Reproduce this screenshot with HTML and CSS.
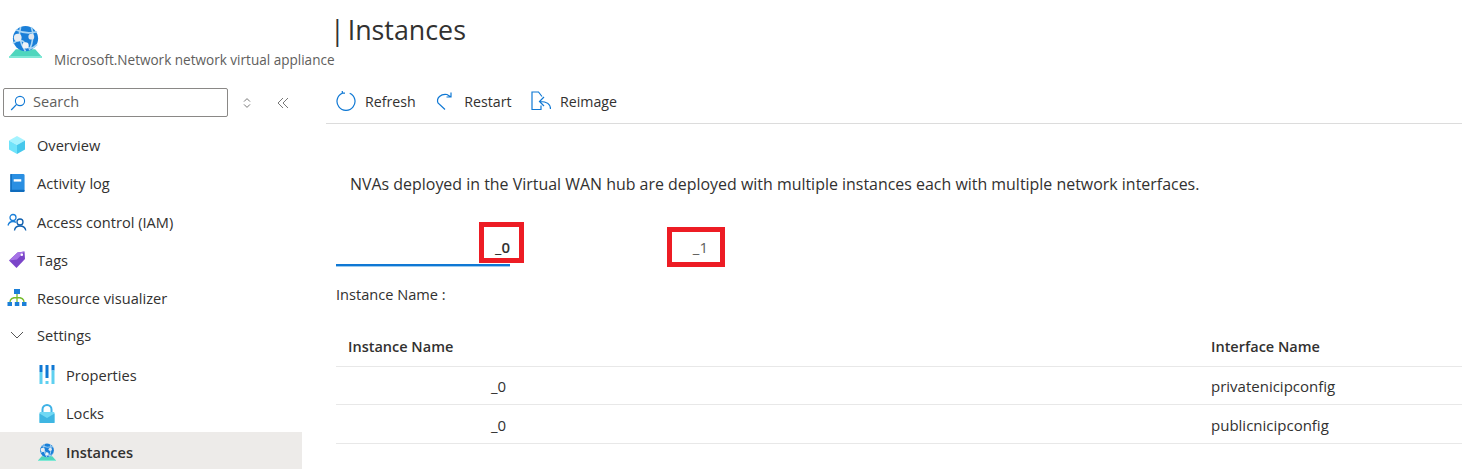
FILE: index.html
```html
<!DOCTYPE html>
<html lang="en">
<head>
<meta charset="utf-8">
<title>Instances</title>
<link rel="stylesheet" href="styles.css">
</head>
<body>
<svg class="defs" width="0" height="0" aria-hidden="true">
  <defs>
    <symbol id="globe" viewBox="0 0 36 34">
      <path d="M1 33 L8 25 H28 L35 33 Z" fill="#4fd6bd"/>
      <path d="M1 32 H35 V34 H1 Z" fill="#7fe8d5"/>
      <circle cx="18" cy="14" r="13" fill="#1a7fd8"/>
      <path d="M8 5 Q18 10 30 7 M5 19 Q14 12 18 20 T30 20 M13 2 Q9 14 18 27 M24 2 Q28 12 22 26" fill="none" stroke="#a9d6f5" stroke-width="1.7"/>
      <circle cx="10" cy="13" r="4" fill="#e8edf2"/>
      <circle cx="24" cy="12" r="3" fill="#dfe6ed"/>
      <circle cx="18" cy="21" r="3.3" fill="#f0f3f6"/>
    </symbol>
  </defs>
</svg>
<div class="page">
  <aside class="sidebar">
    <header class="brand">
      <svg class="brand-icon"><use href="#globe"/></svg>
      <span class="brand-sub">Microsoft.Network network virtual appliance</span>
    </header>
    <div class="search-row">
      <div class="search">
        <svg class="search-icon" viewBox="0 0 16 16"><circle cx="10" cy="6" r="4.6" fill="none" stroke="#0f78d4" stroke-width="1.1"/><path d="M6.6 9.4 1.2 15" stroke="#0f78d4" stroke-width="1.2" fill="none"/></svg>
        <span>Search</span>
      </div>
      <svg class="tool" viewBox="0 0 10 12"><path d="M2 4.6 5 1.6 8 4.6M2 7.4 5 10.4 8 7.4" fill="none" stroke="#777" stroke-width="1"/></svg>
      <svg class="tool collapse" viewBox="0 0 12 12"><path d="M6 1 1 6 6 11M11 1 6 6 11 11" fill="none" stroke="#777" stroke-width="1"/></svg>
    </div>
    <nav class="nav">
      <a class="item">
        <svg class="ico" viewBox="0 0 18 18"><path d="M9 0 17 4.500 9 9 1 4.500Z" fill="#a5f3ff"/><path d="M1 4.500 9 9V18L1 13.500Z" fill="#6fe3fa"/><path d="M17 4.500 9 9V18L17 13.500Z" fill="#45c8ec"/></svg>
        Overview</a>
      <a class="item">
        <svg class="ico" viewBox="0 0 18 19"><rect x="2" y="0" width="15" height="19" rx="1.500" fill="#2a8fe2"/><rect x="2" y="16.500" width="15" height="2.500" rx="1" fill="#0f6cbd"/><rect x="2" y="0" width="1.500" height="19" fill="#0f6cbd"/><rect x="5.500" y="5.500" width="8" height="2.500" fill="#fff"/></svg>
        Activity log</a>
      <a class="item">
        <svg class="ico wide" viewBox="0 0 20 18"><circle cx="6" cy="4.500" r="3" fill="none" stroke="#1b7fd8" stroke-width="1.300"/><path d="M1 12.500 Q2 8.500 6 8.500 Q8 8.500 9 9.500" fill="none" stroke="#1b7fd8" stroke-width="1.300"/><circle cx="13" cy="9" r="3" fill="none" stroke="#0f5fae" stroke-width="1.300"/><path d="M7.500 17.500 Q8 13 13 13 Q18 13 18.800 17.500" fill="none" stroke="#0f5fae" stroke-width="1.300"/></svg>
        Access control (IAM)</a>
      <a class="item">
        <svg class="ico" viewBox="0 0 18 18"><path d="M1 9.500 9.500 1.500 16.500 0.500 17 8 8.500 17Z" fill="#7b45c9"/><path d="M1 9.500 9.500 1.500 16.500 0.500 9 8.500Z" fill="#a673e6"/><circle cx="13.800" cy="3.800" r="1.300" fill="#fff"/></svg>
        Tags</a>
      <a class="item">
        <svg class="ico wide" viewBox="0 0 20 18"><rect x="7" y="0" width="6" height="5" fill="#1b7fd8"/><rect x="0.500" y="13" width="4.500" height="4" fill="#1b7fd8"/><rect x="7.800" y="13" width="4.500" height="4" fill="#1b7fd8"/><rect x="15" y="13" width="4.500" height="4" fill="#1b7fd8"/><path d="M10 5V13M3 13Q3 8.500 10 8.500 Q17 8.500 17 13" fill="none" stroke="#76bc2d" stroke-width="1.300"/></svg>
        Resource visualizer</a>
      <a class="item group">
        <svg class="chev" viewBox="0 0 14 8"><path d="M1 1 7 7 13 1" fill="none" stroke="#555" stroke-width="1"/></svg>
        Settings</a>
      <a class="item sub">
        <svg class="ico tall" viewBox="0 0 16 19"><rect x="0.500" y="0" width="3" height="7" fill="#0f78d4"/><rect x="0.500" y="7" width="3" height="12" fill="#5ed0f0"/><rect x="6.500" y="0" width="3" height="13" fill="#0f78d4"/><rect x="6.500" y="16" width="3" height="3" fill="#5ed0f0"/><rect x="12.500" y="0" width="3" height="5.500" fill="#0f78d4"/><rect x="12.500" y="5.500" width="3" height="13.500" fill="#5ed0f0"/></svg>
        Properties</a>
      <a class="item sub">
        <svg class="ico tall" viewBox="0 0 16 19"><path d="M3.500 8V5.500a4.500 4.500 0 0 1 9 0V8" fill="none" stroke="#3fb2e6" stroke-width="2"/><rect x="0.500" y="8" width="15" height="11" rx="1" fill="#70d8f4"/><path d="M0.500 9.500 8 14 15.500 9.500V19H0.500Z" fill="#3fb6e2"/></svg>
        Locks</a>
      <a class="item sub active">
        <svg class="ico big"><use href="#globe"/></svg>
        Instances</a>
    </nav>
  </aside>
  <main class="main">
    <h1 class="title">| Instances</h1>
    <div class="toolbar">
      <button class="btn">
        <svg class="btn-icon" viewBox="0 0 20 20"><path d="M6.300 2.200A9 9 0 1 0 13.700 2.200M6.300 2.200V0M6.300 2.200H9" fill="none" stroke="#0f78d4" stroke-width="1.200"/></svg>
        Refresh</button>
      <button class="btn">
        <svg class="btn-icon" viewBox="0 0 20 20"><path d="M10 18.500 3 12C1 7 6 2.500 12 3.500L16 6M16 1.500V6H11.500" fill="none" stroke="#0f78d4" stroke-width="1.200"/></svg>
        Restart</button>
      <button class="btn">
        <svg class="btn-icon" viewBox="0 0 20 20"><path d="M10 14.500V18.500H1V1H7.500L11 5.500" fill="none" stroke="#0f78d4" stroke-width="1.200"/><path d="M19.500 18C19.500 13 16 10.500 9 10.500M13 6 8.500 10.500 13 15" fill="none" stroke="#0f78d4" stroke-width="1.200"/></svg>
        Reimage</button>
    </div>
    <div class="content">
      <p class="intro">NVAs deployed in the Virtual WAN hub are deployed with multiple instances each with multiple network interfaces.</p>
      <div class="tabs">
        <div class="tab selected">_0<span class="mark mark-a"></span></div>
        <div class="tab second">_1<span class="mark mark-b"></span></div>
      </div>
      <p class="label">Instance Name :</p>
      <table class="grid">
        <thead>
          <tr><th class="c1">Instance Name</th><th>Interface Name</th></tr>
        </thead>
        <tbody>
          <tr><td class="c1 inst">_0</td><td>privatenicipconfig</td></tr>
          <tr><td class="c1 inst">_0</td><td>publicnicipconfig</td></tr>
        </tbody>
      </table>
    </div>
  </main>
</div>
</body>
</html>
```
FILE: styles.css
```css
* { box-sizing: border-box; }
html, body { margin: 0; height: 469px; overflow: hidden; background: #fff; }
body { font-family: "Open Sans", "Noto Sans", sans-serif; font-size: 14.6px; color: #323130; }
.defs { position: absolute; }
.page { display: flex; height: 469px; }

.sidebar { width: 326px; flex: none; }
.brand { height: 88px; padding: 25px 0 0 8px; display: flex; align-items: flex-start; }
.brand-icon { width: 35px; height: 33px; flex: none; }
.brand-sub { font-size: 13.55px; line-height: 18px; color: #605e5c; margin: 26px 0 0 11px; white-space: nowrap; }

.search-row { display: flex; align-items: center; height: 29px; padding-left: 3px; }
.search { width: 225px; height: 29px; border: 1px solid #8a8886; border-radius: 2px; display: flex; align-items: center; padding: 0 0 4px 6px; color: #605e5c; gap: 7px; }
.search-icon { width: 16px; height: 16px; margin-top: 4px; }
.tool { width: 10px; height: 12px; margin-left: 14px; }
.tool.collapse { width: 12px; margin-left: 25px; }

.nav { display: flex; flex-direction: column; width: 302px; margin-top: 9px; }
.item { height: 38.3px; display: flex; align-items: center; padding-left: 8px; gap: 11px; }
.ico { width: 18px; height: 18px; flex: none; }
.ico.wide { width: 20px; margin-left: -1px; margin-right: -1px; }
.ico.tall { height: 19px; }
.ico.big { width: 20px; height: 18px; margin-left: -1px; margin-right: -1px; }
.chev { width: 14px; height: 8px; margin-left: 2px; margin-right: 2px; flex: none; }
.group { padding-bottom: 3px; }
.sub { padding-left: 38px; gap: 10px; }
.active { background: #edebe9; font-weight: 600; height: 38px; padding-top: 2px; }

.main { flex: 1; min-width: 0; }
.title { margin: 0 0 0 -3px; height: 88px; padding: 9px 0 0 7px; font-size: 26.8px; line-height: 42px; font-weight: 400; color: #323130; word-spacing: -4px; }
.toolbar { display: flex; align-items: center; padding-left: 10px; gap: 19.5px; border-bottom: 1px solid #dcdcdc; margin-top: -1px; padding-bottom: 8px; height: 37px; font-size: 14.2px; }
.btn { display: flex; align-items: center; gap: 9px; background: none; border: 0; padding: 0; font: inherit; color: #323130; }
.btn-icon { width: 20px; height: 20px; }

.content { padding: 0 0 0 10px; }
.intro { margin: 0; padding: 50px 0 0 14px; line-height: 20px; font-size: 15.95px; white-space: nowrap; }
.tabs { display: flex; height: 53px; margin-top: 27px; }
.tab { position: relative; height: 53px; line-height: 52px; text-align: right; width: 174px; font-size: 15px; }
.tab.selected { border-bottom: 2px solid #0f78d4; box-shadow: 0 1px 0 #9ccbf0; height: 45px; font-weight: 600; }
.tab.second { margin-left: 24px; color: #605e5c; }
.mark { position: absolute; border: 5px solid #ed1c24; }
.mark-a { left: 143px; top: 1px; width: 45px; height: 41px; }
.mark-b { left: 133px; top: 6px; width: 58px; height: 40px; }
.label { margin: 10px 0 0; line-height: 20px; font-size: 14.6px; }

.grid { width: 1126px; border-collapse: collapse; margin-top: 21px; table-layout: fixed; font-size: 14.5px; }
.grid th { text-align: left; font-weight: 600; height: 41px; padding: 2px 0 0 12px; }
.grid th:last-child, .grid td:last-child { width: 251px; padding-left: 0; }
.grid td { height: 38.5px; border-top: 1px solid #e8e8e8; padding: 2px 0 0 12px; font-size: 15px; }
.grid tr:last-child td { border-bottom: 1px solid #e8e8e8; }
.grid td.inst { padding-left: 155px; }
```
